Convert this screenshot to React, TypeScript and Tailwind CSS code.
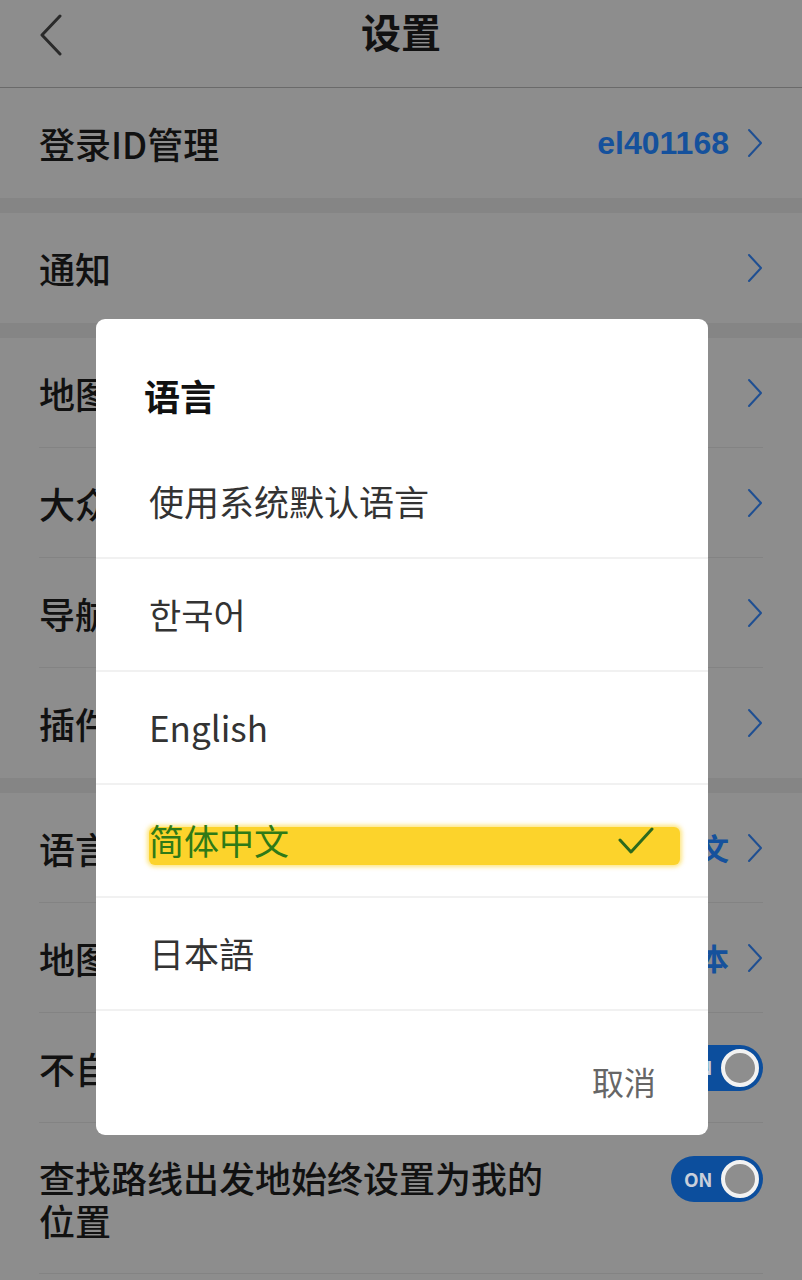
import React from "react";

const cjk = { fontFamily: '"Noto Sans CJK SC", "Noto Sans CJK KR", "Noto Sans", sans-serif' };

function Chevron() {
    return (
        <svg width="16" height="30" viewBox="0 0 16 30" className="shrink-0">
            <path d="M2 2 L14 15 L2 28" fill="none" stroke="#1f4f92" strokeWidth="2" strokeLinecap="round" strokeLinejoin="round" />
        </svg>
    );
}

function Toggle() {
    return (
        <div className="relative w-[92px] h-[46px] rounded-full bg-[#0c4e9d] flex items-center shrink-0">
            <span className="ml-[13px] text-[19px] font-bold text-[#c9cfda] tracking-tight">ON</span>
            <div className="absolute right-[4px] top-[4px] w-[38px] h-[38px] rounded-full border-[4px] border-[#f2f2f2] bg-[#8e8e8e]" />
        </div>
    );
}

// labels are cut off by the dialog, only the visible part is kept
function Row({ label, value, last }: { label: string; value?: string; last?: boolean }) {
    return (
        <div className={"mx-[39px] h-[110px] flex items-center justify-between " + (last ? "" : "border-b border-[#838383]")}>
            <span className="text-[36px] text-[#111] font-medium">{label}</span>
            <div className="flex items-center gap-[18px]">
                {value && <span className="text-[30px] text-[#15519c] font-bold">{value}</span>}
                <Chevron />
            </div>
        </div>
    );
}

function Gap() {
    return <div className="h-[15px] bg-[#858585]" />;
}

const languages = ["使用系统默认语言", "한국어", "English", "简体中文", "日本語"];

export default function App() {
    return (
        <div className="relative w-[802px] h-[1280px] overflow-hidden bg-[#8d8d8d]" style={cjk}>
            {/* header */}
            <div className="h-[88px] border-b border-[#6a6a6a] flex items-center justify-center relative">
                <svg width="24" height="42" viewBox="0 0 24 42" className="absolute left-[39px] top-[14px]">
                    <path d="M21 2 L3 21 L21 40" fill="none" stroke="#2a2a2a" strokeWidth="3" strokeLinecap="round" strokeLinejoin="round" />
                </svg>
                <span className="text-[40px] font-bold text-[#111] -mt-[26px]">设置</span>
            </div>

            <div className="mx-[39px] h-[110px] flex items-center justify-between">
                <span className="text-[36px] text-[#111] font-medium">登录ID管理</span>
                <div className="flex items-center gap-[18px]">
                    <span className="text-[32px] text-[#15519c] font-bold" style={{ fontFamily: '"Liberation Sans", sans-serif' }}>el401168</span>
                    <Chevron />
                </div>
            </div>
            <Gap />
            <Row label="通知" last />
            <Gap />
            <Row label="地图" />
            <Row label="大众" />
            <Row label="导航" />
            <Row label="插件" last />
            <Gap />
            <Row label="语言" value="简体中文" />
            <Row label="地图" value="基本" />
            <div className="mx-[39px] h-[110px] flex items-center justify-between border-b border-[#838383]">
                <span className="text-[36px] text-[#111] font-medium">不自</span>
                <Toggle />
            </div>
            <div className="mx-[39px] h-[151px] flex items-start justify-between border-b border-[#838383] pt-[33px]">
                <span className="text-[36px] leading-[43px] text-[#111] font-medium w-[530px]">查找路线出发地始终设置为我的位置</span>
                <Toggle />
            </div>

            {/* language dialog */}
            <div className="absolute left-[96px] top-[319px] w-[612px] h-[816px] bg-white rounded-[9px] flex flex-col">
                <div className="h-[127px] pl-[48px] pt-[55px]">
                    <span className="text-[36px] leading-[42px] font-bold text-[#111]">语言</span>
                </div>
                {languages.map((lang) => (
                    <div key={lang} className="h-[113px] border-b-2 border-[#f1f1f1] flex items-center pl-[53px] pr-[28px]">
                        {lang === "简体中文" ? (
                            <div className="flex-1 h-[38px] mt-[10px] bg-[#fcd32b] rounded-[6px] shadow-[0_0_4px_2px_rgba(252,211,43,0.6)] flex items-center justify-between pr-[26px]">
                                <span className="text-[35px] text-[#2f7a17] -mt-[10px]">{lang}</span>
                                <svg width="36" height="30" viewBox="0 0 36 30" className="-mt-[10px]">
                                    <path d="M2 14 L13 26 L34 3" fill="none" stroke="#2d6a1d" strokeWidth="3" strokeLinecap="round" strokeLinejoin="round" />
                                </svg>
                            </div>
                        ) : (
                            <span className="text-[35px] text-[#333]">{lang}</span>
                        )}
                    </div>
                ))}
                <div className="flex-1 flex items-center justify-end pr-[52px] pt-[15px]">
                    <span className="text-[32px] text-[#666]">取消</span>
                </div>
            </div>
        </div>
    );
}
